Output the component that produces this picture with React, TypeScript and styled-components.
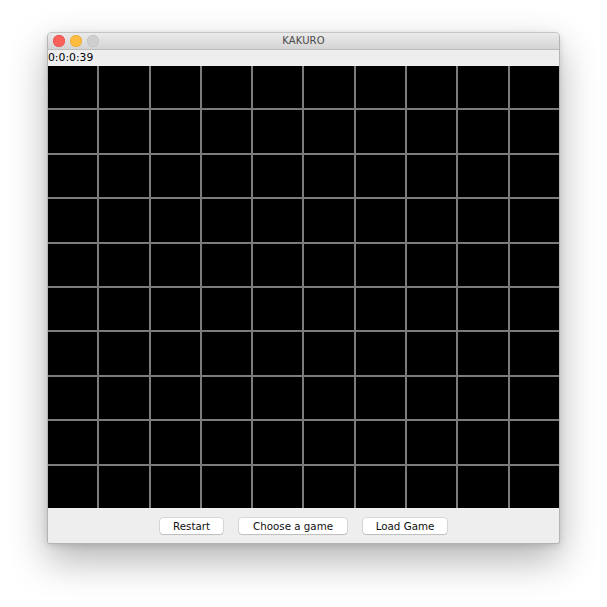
import React from "react";
import styled, { createGlobalStyle } from "styled-components";

const GlobalStyle = createGlobalStyle`
  html, body {
    margin: 0;
    padding: 0;
    background: #ffffff;
  }
  body {
    font-family: "DejaVu Sans", "Liberation Sans", sans-serif;
  }
  * { box-sizing: border-box; }
`;

const Page = styled.div`
  min-height: 607px;
  padding: 32px 0 60px 47px;
`;

const Window = styled.div`
  width: 513px;
  border: 1px solid #b4b4b4;
  border-top-color: #c4c4c4;
  border-radius: 5px 5px 3px 3px;
  overflow: hidden;
  background: #eeeeee;
  box-shadow: 0 16px 38px rgba(0, 0, 0, 0.3), 0 2px 6px rgba(0, 0, 0, 0.12);
`;

const TitleBar = styled.div`
  height: 17px;
  border-bottom: 1px solid #bcbcbc;
  background: linear-gradient(#ebebeb, #d4d4d4);
  display: grid;
  grid-template-columns: 1fr auto 1fr;
  align-items: center;
`;

const Lights = styled.div`
  display: flex;
  gap: 5px;
  padding-left: 5px;
`;

const Light = styled.span<{ $fill: string; $edge: string }>`
  width: 12px;
  height: 12px;
  border-radius: 50%;
  background: ${(p) => p.$fill};
  box-shadow: inset 0 0 0 0.5px ${(p) => p.$edge};
`;

const Title = styled.div`
  font-size: 10px;
  color: #4b4b4b;
  letter-spacing: 0.1px;
  line-height: 16px;
`;

const TimerBar = styled.div`
  height: 16px;
  background: #eeeeee;
  font-size: 10.8px;
  line-height: 16px;
  color: #000;
`;

const Board = styled.div`
  height: 442px;
  display: grid;
  grid-template-columns: repeat(10, 1fr);
  grid-template-rows: repeat(10, 1fr);
  gap: 2px;
  background: #7c7c7c;
`;

const Cell = styled.div`
  background: #000000;
`;

const Footer = styled.div`
  height: 35px;
  display: flex;
  justify-content: center;
  align-items: flex-start;
  gap: 16px;
  padding-top: 10px;
  background: #eeeeee;
`;

const Button = styled.button<{ $w: number }>`
  width: ${(p) => p.$w}px;
  height: 16px;
  padding: 0;
  border: none;
  border-radius: 3px;
  background: #ffffff;
  box-shadow: 0 0 0 0.5px rgba(0, 0, 0, 0.18), 0 1px 1px rgba(0, 0, 0, 0.12);
  font-family: "DejaVu Sans", "Liberation Sans", sans-serif;
  font-size: 10.3px;
  line-height: 16px;
  color: #111111;
`;

export default function App() {
  const cells = Array.from({ length: 100 }, (_, i) => i);
  return (
    <>
      <GlobalStyle />
      <Page>
        <Window>
          <TitleBar>
            <Lights>
              <Light $fill="#fc605b" $edge="#de4c47" />
              <Light $fill="#fdbc40" $edge="#dea236" />
              <Light $fill="#cfcfcf" $edge="#bdbdbd" />
            </Lights>
            <Title>KAKURO</Title>
            <span />
          </TitleBar>
          <TimerBar>0:0:0:39</TimerBar>
          <Board>
            {cells.map((i) => (
              <Cell key={i} />
            ))}
          </Board>
          <Footer>
            <Button $w={63}>Restart</Button>
            <Button $w={108}>Choose a game</Button>
            <Button $w={84}>Load Game</Button>
          </Footer>
        </Window>
      </Page>
    </>
  );
}
